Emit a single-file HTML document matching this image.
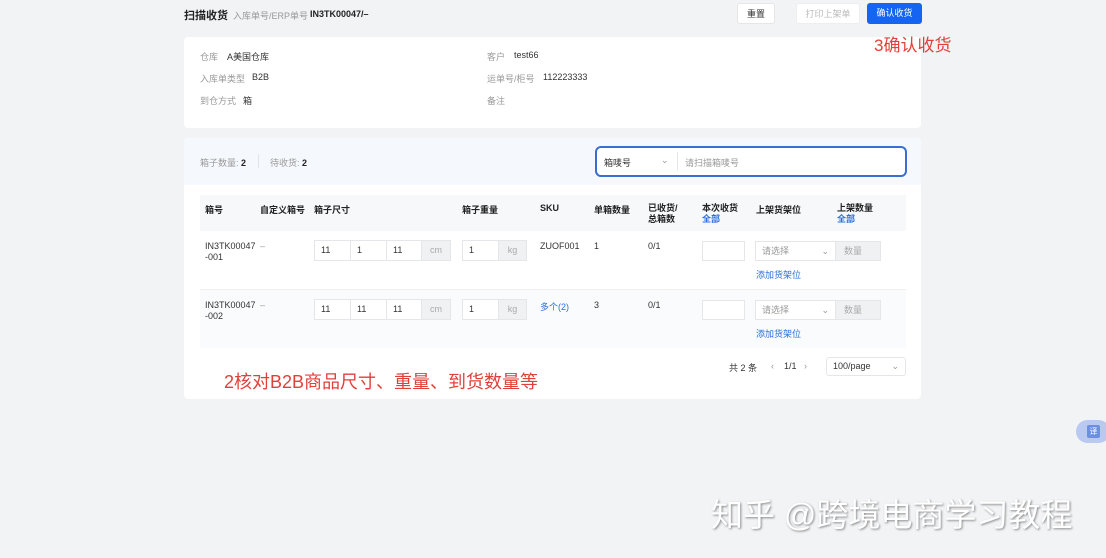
<!DOCTYPE html>
<html><head><meta charset="utf-8"><style>
*{margin:0;padding:0;box-sizing:border-box}
body{width:1106px;height:558px;background:#f2f3f5;font-family:"Liberation Sans","Noto Sans CJK SC",sans-serif;font-size:9px;color:#333;position:relative;overflow:hidden}
.a{position:absolute;white-space:nowrap}
.g{color:#999}
.b{font-weight:bold;color:#222}
.card{position:absolute;background:#fff;border-radius:4px}
.btn{position:absolute;height:21px;border-radius:3px;font-size:9px;text-align:center;line-height:21px}
.inp{position:absolute;height:21px;border:1px solid #e4e6ea;background:#fff;font-size:9px;line-height:19px;padding-left:6px}
.suf{position:absolute;height:21px;background:#f0f1f3;border:1px solid #e4e6ea;color:#aaa;font-size:9px;line-height:19px;text-align:center}
.lk{color:#2a6fdb}
</style></head><body>
<div class="a b" style="left:184px;top:7px;font-size:11px">扫描收货</div>
<div class="a g" style="left:233px;top:9px">入库单号/ERP单号</div>
<div class="a b" style="left:310px;top:9px">IN3TK00047/–</div>
<div class="btn" style="left:737px;top:3px;width:38px;background:#fff;border:1px solid #e6e6e6;color:#333">重置</div>
<div class="btn" style="left:796px;top:3px;width:64px;background:#fff;border:1px solid #eee;color:#bbb">打印上架单</div>
<div class="btn" style="left:867px;top:3px;width:55px;background:#1664f2;color:#fff">确认收货</div>

<div class="card" style="left:184px;top:37px;width:737px;height:91px"></div>
<div class="a" style="left:874px;top:31px;font-size:17px;color:#e0403a">3确认收货</div>
<div class="a g" style="left:200px;top:50px">仓库</div><div class="a" style="left:227px;top:50px">A美国仓库</div>
<div class="a g" style="left:200px;top:72px">入库单类型</div><div class="a" style="left:252px;top:72px">B2B</div>
<div class="a g" style="left:200px;top:94px">到仓方式</div><div class="a" style="left:243px;top:94px">箱</div>
<div class="a g" style="left:487px;top:50px">客户</div><div class="a" style="left:514px;top:50px">test66</div>
<div class="a g" style="left:487px;top:72px">运单号/柜号</div><div class="a" style="left:543px;top:72px">112223333</div>
<div class="a g" style="left:487px;top:94px">备注</div>

<div class="card" style="left:184px;top:138px;width:737px;height:261px"></div>
<div class="a" style="left:184px;top:138px;width:737px;height:47px;background:#f5f8fc;border-radius:4px 4px 0 0"></div>
<div class="a g" style="left:200px;top:156px">箱子数量: <b style="color:#222">2</b></div>
<div class="a" style="left:258px;top:154px;width:1px;height:14px;background:#e3e3e3"></div>
<div class="a g" style="left:270px;top:156px">待收货: <b style="color:#222">2</b></div>
<div class="a" style="left:595px;top:146px;width:312px;height:31px;border:2px solid #3a6fd0;border-radius:6px;background:#fff"></div>
<div class="a" style="left:604px;top:156px">箱唛号</div>
<div class="a g" style="left:661px;top:155px">⌄</div>
<div class="a" style="left:677px;top:152px;width:1px;height:18px;background:#e6e6e6"></div>
<div class="a g" style="left:685px;top:156px">请扫描箱唛号</div>

<div class="a" style="left:200px;top:195px;width:706px;height:36px;background:#f7f8fa"></div>
<div class="a" style="left:200px;top:290px;width:706px;height:58px;background:#fafbfc"></div>
<div class="a" style="left:200px;top:289px;width:706px;height:1px;background:#f0f0f0"></div>
<div class="a b" style="left:205px;top:203px">箱号</div>
<div class="a b" style="left:260px;top:203px">自定义箱号</div>
<div class="a b" style="left:314px;top:203px">箱子尺寸</div>
<div class="a b" style="left:462px;top:203px">箱子重量</div>
<div class="a b" style="left:540px;top:203px">SKU</div>
<div class="a b" style="left:594px;top:203px">单箱数量</div>
<div class="a b" style="left:648px;top:203px;line-height:11px">已收货/<br>总箱数</div>
<div class="a b" style="left:702px;top:203px;line-height:11px">本次收货<br><span class="lk">全部</span></div>
<div class="a b" style="left:756px;top:203px">上架货架位</div>
<div class="a b" style="left:837px;top:203px;line-height:11px">上架数量<br><span class="lk">全部</span></div>

<div class="a" style="left:205px;top:241px;line-height:11px">IN3TK00047<br>-001</div>
<div class="a g" style="left:260px;top:241px">–</div>
<div class="inp" style="left:314px;top:240px;width:37px">11</div>
<div class="inp" style="left:350px;top:240px;width:37px">1</div>
<div class="inp" style="left:386px;top:240px;width:36px">11</div>
<div class="suf" style="left:421px;top:240px;width:30px">cm</div>
<div class="inp" style="left:462px;top:240px;width:37px">1</div>
<div class="suf" style="left:498px;top:240px;width:29px">kg</div>
<div class="a" style="left:540px;top:241px">ZUOF001</div>
<div class="a" style="left:594px;top:241px">1</div>
<div class="a" style="left:648px;top:241px">0/1</div>
<div class="inp" style="left:702px;top:241px;width:43px;height:20px"></div>
<div class="inp g" style="left:755px;top:241px;width:81px;height:20px">请选择<span style="position:absolute;right:6px">⌄</span></div>
<div class="suf" style="left:835px;top:241px;width:46px;height:20px;text-align:left;padding-left:8px">数量</div>
<div class="a lk" style="left:756px;top:268px">添加货架位</div>

<div class="a" style="left:205px;top:300px;line-height:11px">IN3TK00047<br>-002</div>
<div class="a g" style="left:260px;top:300px">–</div>
<div class="inp" style="left:314px;top:299px;width:37px">11</div>
<div class="inp" style="left:350px;top:299px;width:37px">11</div>
<div class="inp" style="left:386px;top:299px;width:36px">11</div>
<div class="suf" style="left:421px;top:299px;width:30px">cm</div>
<div class="inp" style="left:462px;top:299px;width:37px">1</div>
<div class="suf" style="left:498px;top:299px;width:29px">kg</div>
<div class="a lk" style="left:540px;top:300px">多个(2)</div>
<div class="a" style="left:594px;top:300px">3</div>
<div class="a" style="left:648px;top:300px">0/1</div>
<div class="inp" style="left:702px;top:300px;width:43px;height:20px"></div>
<div class="inp g" style="left:755px;top:300px;width:81px;height:20px">请选择<span style="position:absolute;right:6px">⌄</span></div>
<div class="suf" style="left:835px;top:300px;width:46px;height:20px;text-align:left;padding-left:8px">数量</div>
<div class="a lk" style="left:756px;top:327px">添加货架位</div>

<div class="a" style="left:224px;top:368px;font-size:18px;color:#e0403a">2核对B2B商品尺寸、重量、到货数量等</div>
<div class="a" style="left:729px;top:361px">共 2 条</div>
<div class="a g" style="left:771px;top:361px">‹</div>
<div class="a" style="left:784px;top:361px">1/1</div>
<div class="a g" style="left:804px;top:361px">›</div>
<div class="inp" style="left:826px;top:357px;width:80px;height:19px;border-radius:3px;line-height:17px">100/page<span class="g" style="position:absolute;right:6px">⌄</span></div>

<div class="a" style="left:1076px;top:420px;width:34px;height:23px;border-radius:12px;background:#b9c9f0"></div>
<div class="a" style="left:1087px;top:425px;width:13px;height:13px;background:#6c8fe0;color:#fff;font-size:8px;text-align:center;line-height:13px;border-radius:2px">译</div>
<div class="a" style="left:711px;top:490px;font-size:32px;color:#fff;text-shadow:1px 1px 2px #888">知乎 @跨境电商学习教程</div>
</body></html>
